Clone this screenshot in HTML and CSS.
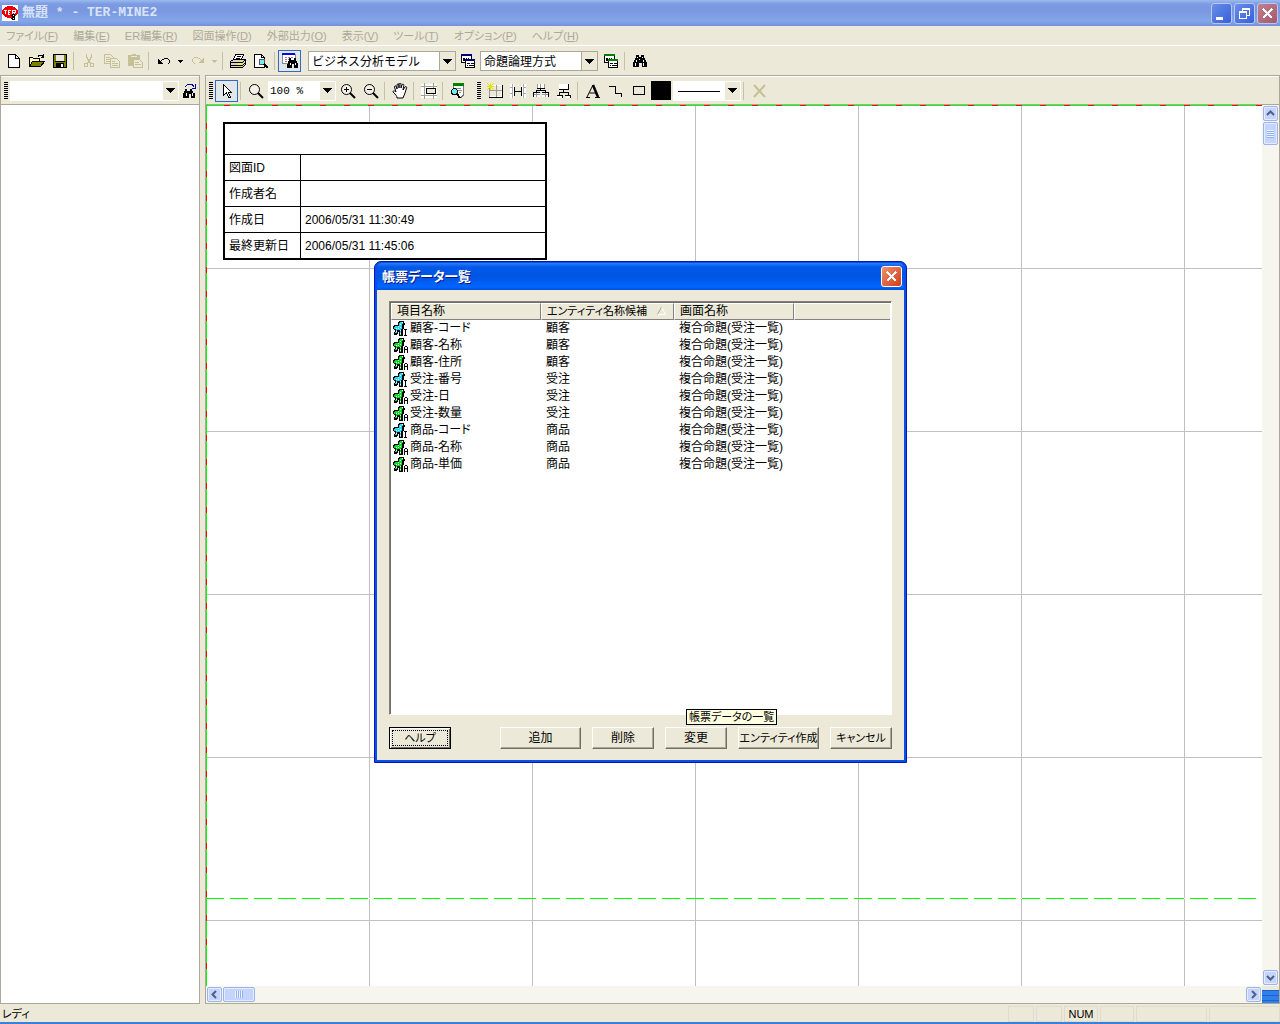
FILE: index.html
```html
<!DOCTYPE html>
<html lang="ja">
<head>
  <meta charset="UTF-8" />
  <title>無題 * - TER-MINE2</title>
  <link rel="stylesheet" href="styles.css">
</head>
<body>
  <svg class="defs" width="0" height="0" aria-hidden="true">
    <symbol id="down" viewBox="0 0 9 5"><path d="M0 0h9v1H0zM1 1h7v1H1zM2 2h5v1H2zM3 3h3v1H3zM4 4h1v1H4z" fill="currentColor"/></symbol>
    <symbol id="man" viewBox="0 0 16 16">
      <path d="M6 0h5v2h1v2h-1v4h-1v7H6v-4H5v2H4v1H1v-3h1V9H1V8H0V5h1V4h4V1h1z" fill="#000"/>
      <path d="M7 1h3v2H9v5H8v6H7V9H4v3H2v-1h1V8H1V6h1V5h4V2h1z" fill="currentColor"/>
      <path d="M9 1h1v1H9zM7 3h1v1H7zM5 5h1v1H5zM7 6h1v1H7zM3 7h1v1H3zM5 7h1v1H5zM7 9h1v1H7zM3 10h1v1H3zM7 12h1v1H7z" fill="#fff"/>
    </symbol>
    <symbol id="man-i" viewBox="0 0 16 16"><use href="#man" width="16" height="16"/><path d="M10 8h6v8h-6z" fill="#fff"/><path d="M11 8h3v1h-1v5h1v1h-3v-1h1V9h-1z" fill="#000"/></symbol>
    <symbol id="man-a" viewBox="0 0 16 16"><use href="#man" width="16" height="16"/><path d="M10 8h6v8h-6z" fill="#fff"/><path d="M12 8h2v1h-2zM11 9h1v6h-1zM14 9h1v6h-1zM12 11h2v1h-2z" fill="#000"/></symbol>
    <symbol id="binoculars" viewBox="0 0 16 16">
      <path d="M4 2h3v2h2V2h3v3h1v2h1v2h1v5h-5v-4H7v4H1V9h1V7h1V5h1z" fill="#000"/>
      <path d="M5 4h1v1H5zM10 4h1v1h-1zM4 7h1v2H4zM11 7h1v2h-1zM3 10h1v3H3zM11 10h1v3h-1zM7 6h1v1H7z" fill="#fff"/>
    </symbol>
    <symbol id="forms" viewBox="0 0 16 16">
      <path d="M1.500 1.500h10v8h-10z" fill="#fff" stroke="#000"/><path d="M1 1h11v2H1z" fill="currentColor"/>
      <path d="M3 5h2v3H3zM6 5h1v3H6zM8 5h1v3H8z" fill="#000"/>
      <path d="M5.500 6.500h9v8h-9z" fill="#fff" stroke="#000"/><path d="M5 6h10v2H5z" fill="currentColor"/>
      <path d="M7 10h3v1H7zM11 10h3v1h-3zM7 12h1v1H7zM9 12h5v1H9z" fill="#000"/>
    </symbol>
  </svg>

  <div class="window">
    <header class="titlebar">
      <svg class="app-icon" viewBox="0 0 16 16"><path d="M0 0h16v16H0z" fill="#fff"/><ellipse cx="8" cy="7" rx="8" ry="6" fill="#e00"/><path d="M2 5h3M3.500 5L3 9M6 5h3M6 7h2M6 9h2M6 5v4M10 9V5h3v2h-3M12 7l1 2" stroke="#fff" fill="none"/><circle cx="11.500" cy="10.500" r="1.500" fill="#fff" stroke="#000"/><circle cx="11.500" cy="13.500" r="1.500" fill="#fff" stroke="#000"/></svg>
      <h1>無題 * - TER-MINE2</h1>
      <button class="win-btn" aria-label="最小化"><svg viewBox="0 0 19 19"><path d="M4 13h7v3H4z" fill="#fff"/></svg></button>
      <button class="win-btn" aria-label="元に戻す"><svg viewBox="0 0 19 19"><path d="M7 4h8v2H7zM14 6h1v6h-1zM12 11h2v1h-2zM7 6h1v1H7zM4 7h8v2H4zM4 9h1v6H4zM11 9h1v6h-1zM5 14h6v1H5z" fill="#fff"/></svg></button>
      <button class="win-btn close" aria-label="閉じる"><svg viewBox="0 0 19 19"><path d="M5 5l9 9M14 5l-9 9" stroke="#fff" stroke-width="2"/></svg></button>
    </header>

    <nav class="menubar kana">
      <button>ファイル(<u>F</u>)</button>
      <button>編集(<u>E</u>)</button>
      <button>ER編集(<u>R</u>)</button>
      <button>図面操作(<u>D</u>)</button>
      <button>外部出力(<u>O</u>)</button>
      <button>表示(<u>V</u>)</button>
      <button>ツール(<u>T</u>)</button>
      <button>オプション(<u>P</u>)</button>
      <button>ヘルプ(<u>H</u>)</button>
    </nav>

    <div class="toolbar standard">
      <button class="tool" aria-label="新規作成"><svg viewBox="0 0 16 16"><path d="M2.500 1.500h7l4 4v9h-11z" fill="#fff" stroke="#000"/><path d="M9.500 1.500v4h4" fill="none" stroke="#000"/></svg></button>
      <button class="tool" aria-label="開く"><svg viewBox="0 0 16 16"><path d="M.5 13.500v-9h3l1 1h6v3" fill="#ffffb0" stroke="#000"/><path d="M.5 13.500l3-5h12l-4 5z" fill="#808000" stroke="#000"/><path d="M9 3.500c1-2 3-2 5 0M14.500 1v3H12" fill="none" stroke="#000"/></svg></button>
      <button class="tool" aria-label="保存"><svg viewBox="0 0 16 16"><path d="M1.500 1.500h13v13h-13z" fill="#808000" stroke="#000"/><path d="M4 2h8v6H4z" fill="#ece9d8"/><path d="M4 10h8v5H4zM3 8h10v1H3z" fill="#000"/><path d="M9 11h2v3H9z" fill="#fff"/></svg></button>
      <span class="sep"></span>
      <button class="tool off" aria-label="切り取り"><svg viewBox="0 0 16 16"><path d="M5.500 1v3l4 6M10.500 1v3l-4 6" fill="none" stroke="currentColor" stroke-width="1.500"/><circle cx="5" cy="12" r="2" fill="none" stroke="currentColor"/><circle cx="11" cy="12" r="2" fill="none" stroke="currentColor"/></svg></button>
      <button class="tool off" aria-label="コピー"><svg viewBox="0 0 16 16"><path d="M.5 1.500h6l3 3v6h-9zM2 4h4M2 6h5M2 8h5" fill="none" stroke="currentColor"/><path d="M6.500 5.500h6l3 3v6h-9z" fill="#ece9d8" stroke="currentColor"/><path d="M8 8.500h3M8 10.500h6M8 12.500h6" stroke="currentColor"/></svg></button>
      <button class="tool off" aria-label="貼り付け"><svg viewBox="0 0 16 16"><path d="M1 2h4V1h4v1h4v11H1z" fill="currentColor"/><path d="M4 3h6v1H4z" fill="#ece9d8"/><path d="M6.500 6.500h6l3 3v5h-9z" fill="#ece9d8" stroke="currentColor"/><path d="M8 9.500h4M8 11.500h6" stroke="currentColor"/></svg></button>
      <span class="sep"></span>
      <button class="tool" aria-label="元に戻す"><svg viewBox="0 0 16 16"><path d="M2 6h1v1h1v1h1v1h1v1h1v1H2zM5 7h1v1H5zM6 6h2v1H6zM8 5h4v1H8zM12 6h1v1h-1zM13 7h1v3h-1zM12 10h1v1h-1z" fill="#000"/></svg></button>
      <button class="tool narrow" aria-label="元に戻す一覧"><svg class="arrow"><use href="#down"/></svg></button>
      <button class="tool off" aria-label="やり直し"><svg viewBox="0 0 16 16"><path d="M14 5h-1v1h-1v1h-1v1h-1v1H9v1h5zM10 6h1v1h-1zM8 5h2v1H8zM4 4h4v1H4zM3 5h1v1H3zM2 6h1v3H2zM3 9h1v1H3zM4 10h1v1H4z" fill="currentColor"/></svg></button>
      <button class="tool narrow off" aria-label="やり直し一覧"><svg class="arrow"><use href="#down"/></svg></button>
      <span class="sep"></span>
      <button class="tool" aria-label="印刷"><svg viewBox="0 0 16 16"><path d="M5.500 1.500h8l-2 5h-8z" fill="#fff" stroke="#000"/><path d="M.5 8.500l3-2h12v5l-3 3H.5z" fill="#d8d4c4" stroke="#000"/><path d="M7 3.500h4M6 5h4M1 9.500h12M1 12.500h12M13 9l2-2M13 12l2-2" stroke="#000"/><path d="M8 10h4v2H8z" fill="#ff0"/></svg></button>
      <button class="tool" aria-label="印刷プレビュー"><svg viewBox="0 0 16 16"><path d="M1.500 1.500h7l3 3v10h-10z" fill="#fff" stroke="#000"/><path d="M8.500 1.500v3h3" fill="none" stroke="#000"/><circle cx="9" cy="9" r="3" fill="#7ee" stroke="#555"/><path d="M11 11l4 4" stroke="#000" stroke-width="2"/></svg></button>
      <span class="sep"></span>
      <button class="tool on" aria-label="帳票データ一覧"><svg viewBox="0 0 16 16"><path d="M.5 1.500h13v9H.5z" fill="#fff" stroke="#888"/><path d="M0 0h13v2H0z" fill="#00f"/><path d="M3 4h2M6 4h2M9 4h2M3 6h2M6 6h2M3 8h2" stroke="#888"/><path d="M7 5h2v2h3V5h2v3h1v2h1v5h-4v-4h-2v4H5v-4h1V8h1z" fill="#000"/><path d="M8 10v2M13 10v2" stroke="#fff"/></svg></button>
      <span class="combo model"><select aria-label="モデル"><option>ビジネス分析モデル</option></select><span class="combo-arrow"><svg class="arrow"><use href="#down"/></svg></span></span>
      <button class="tool navy" aria-label="モデル設定"><svg><use href="#forms"/></svg></button>
      <span class="combo method"><select aria-label="方式"><option>命題論理方式</option></select><span class="combo-arrow"><svg class="arrow"><use href="#down"/></svg></span></span>
      <button class="tool green" aria-label="方式設定"><svg><use href="#forms"/></svg></button>
      <span class="sep"></span>
      <button class="tool" aria-label="検索"><svg><use href="#binoculars"/></svg></button>
    </div>

    <div class="workspace">
      <aside class="sidebar">
        <div class="toolbar">
          <span class="grip"></span>
          <span class="combo flat search"><select aria-label="検索対象"><option></option></select><span class="combo-arrow"><svg class="arrow"><use href="#down"/></svg></span></span>
          <button class="tool" aria-label="検索"><svg viewBox="0 0 16 16"><path d="M4 6h2v2h3V6h2v2h1v2h2v5h-4v-4H8v4H2v-5h1V8h1z" fill="#000"/><path d="M5 10v3M11 10v3" stroke="#fff"/><path d="M4 4l3-3h4l2 3M14.500 1v4H11" fill="none" stroke="#0000a0"/></svg></button>
        </div>
        <div class="tree"></div>
      </aside>

      <main class="editor">
        <div class="toolbar">
          <span class="grip"></span>
          <button class="tool on" aria-label="選択"><svg viewBox="0 0 16 16"><path d="M4.500 1.500v11l3-3 2 5h2l-2-5h3z" fill="#fff" stroke="#000"/></svg></button>
          <span class="sep"></span>
          <button class="tool wide" aria-label="ズーム"><svg class="round" viewBox="0 0 16 16"><circle cx="6.500" cy="6.500" r="5" fill="#f4f2e8" stroke="#000"/><path d="M10 10l5 5" stroke="#000" stroke-width="2"/></svg></button>
          <span class="combo flat zoom"><select aria-label="倍率"><option>100 %</option></select><span class="combo-arrow"><svg class="arrow"><use href="#down"/></svg></span></span>
          <button class="tool" aria-label="拡大"><svg class="round" viewBox="0 0 16 16"><circle cx="6.500" cy="6.500" r="5" fill="#f4f2e8" stroke="#000"/><path d="M4 6.500h5M6.500 4v5" stroke="#000"/><path d="M10 10l5 5" stroke="#000" stroke-width="2"/></svg></button>
          <button class="tool" aria-label="縮小"><svg class="round" viewBox="0 0 16 16"><circle cx="6.500" cy="6.500" r="5" fill="#f4f2e8" stroke="#000"/><path d="M4 6.500h5" stroke="#000"/><path d="M10 10l5 5" stroke="#000" stroke-width="2"/></svg></button>
          <span class="sep"></span>
          <button class="tool" aria-label="移動"><svg class="round" viewBox="0 0 16 16"><path d="M5 15c0-2-1-3-4-6 0-2 2-1 3 0L2.500 4c0-1.500 1.500-1.500 2 0L5 6V2c0-1.500 2-1.500 2 0v3-4c0-1.500 2-1.500 2 0v4l1-3c.5-1.500 2-1 1.800.5L11 7l2-3c1-1 2 0 1.500 1L13 10l-2 5z" fill="#fff" stroke="#000"/></svg></button>
          <span class="sep"></span>
          <button class="tool" aria-label="グリッド"><svg viewBox="0 0 16 16"><path d="M0 1h16v14H0z" fill="#fff"/><path d="M3 0h1v16H3zM12 0h1v16h-1zM0 3h16v1H0zM0 12h16v1H0z" fill="#a0a090"/><path d="M5 5h10v6H5z" fill="#000"/><path d="M6 6h8v4H6z" fill="#ece9d8"/></svg></button>
          <span class="sep"></span>
          <button class="tool" aria-label="図面検索"><svg viewBox="0 0 16 16"><path d="M3 1h11v12H7" fill="#fff"/><path d="M3 0h11v3H3z" fill="#008000"/><path d="M3.500 3v3M13.500 3v9l-2 2H8" fill="none" stroke="#777"/><path d="M6 5h5M8 7h4M9 9h2" stroke="#888"/><circle cx="4.500" cy="8.500" r="3" fill="#6ee" stroke="#000"/><path d="M7 11l3 4" stroke="#000" stroke-width="2"/></svg></button>
          <span class="grip inner"></span>
          <button class="tool" aria-label="エンティティ"><svg viewBox="0 0 16 16"><path d="M2 2h14v13H2z" fill="#fff"/><path d="M2 14h14v1H2zM15 2h1v13h-1z" fill="#000"/><path d="M3 3h11v10H3z" fill="#ece9d8"/><path d="M2 7h13v1H2zM9 2h1v12H9zM2 2h1v12H2z" fill="#999"/><path d="M0 0h1v1H0zM1 1h1v1H1zM2 2h3v3H2zM5 1h1v1H5zM6 0h1v1H6zM5 5h1v1H5zM6 6h1v1H6zM1 5h1v1H1zM0 6h1v1H0zM3 0h1v7H3zM0 3h7v1H0z" fill="#e8e000"/></svg></button>
          <button class="tool" aria-label="リレーション"><svg viewBox="0 0 16 16"><path d="M0 1h4v14H0zM12 1h4v14h-4z" fill="#fff"/><path d="M0 4h3v1H0zM0 10h3v1H0zM2 1h1v14H2zM13 4h3v1h-3zM13 10h3v1h-3zM13 1h1v14h-1z" fill="#aaa"/><path d="M4 4h1v9H4zM11 4h1v9h-1zM4 8h8v1H4z" fill="#000"/></svg></button>
          <button class="tool" aria-label="サブセット"><svg viewBox="0 0 16 16"><path d="M0 9h7v5H0zM9 9h7v5H9zM4 1h8v4H4z" fill="#fff"/><path d="M4 1h1v4H4zM7 1h1v4H7zM11 1h1v4h-1zM0 11h7v1H0zM9 11h7v1H9zM3 10h1v4H3zM12 10h1v4h-1z" fill="#999"/><path d="M4 5h8v1H4zM7 6h1v2H7zM3 7h10v1H3zM3 8h1v1H3zM12 8h1v1h-1zM0 9h7v1H0zM9 9h7v1H9zM0 9h1v5H0zM15 9h1v5h-1z" fill="#000"/></svg></button>
          <button class="tool" aria-label="統合"><svg viewBox="0 0 16 16"><path d="M3 1h10v5H3zM1 13h5v2H1zM10 13h5v2h-5z" fill="#fff"/><path d="M3 6h10v1H3zM12 1h1v6h-1zM7 7h1v3H7zM3 9h10v1H3zM3 10h1v2H3zM12 10h1v2h-1zM1 12h6v1H1zM9 12h6v1H9zM6 12h1v3H6zM14 12h1v3h-1z" fill="#000"/></svg></button>
          <span class="sep"></span>
          <button class="tool" aria-label="文字"><svg class="round" viewBox="0 0 16 16"><path d="M2 14L8 2l5 12M4.500 10h7M1 14.500h4M10 14.500h5" fill="none" stroke="#000"/><path d="M8 2l5 12" stroke="#000" stroke-width="2.500"/></svg></button>
          <button class="tool" aria-label="折れ線"><svg viewBox="0 0 16 16"><path d="M1 3h7v1H1zM7 3h1v8H7zM7 10h7v1H7zM13 10h1v4h-1z" fill="#000"/></svg></button>
          <button class="tool" aria-label="四角形"><svg viewBox="0 0 16 16"><path d="M2.500 3.500h11v8h-11z" fill="none" stroke="#000"/></svg></button>
          <button class="color" aria-label="線の色"></button>
          <span class="combo flat line"><select aria-label="線種"><option></option></select><span class="combo-arrow"><svg class="arrow"><use href="#down"/></svg></span></span>
          <span class="sep"></span>
          <button class="tool off" aria-label="削除"><svg class="round" viewBox="0 0 16 16"><path d="M3 2l11 12M14 2L3 14" stroke="currentColor" stroke-width="2"/></svg></button>
        </div>

        <div class="view">
          <div class="canvas">
            <table class="sheet-info">
              <tr><td colspan="2" class="sheet-title"></td></tr>
              <tr><th scope="row">図面ID</th><td></td></tr>
              <tr><th scope="row">作成者名</th><td></td></tr>
              <tr><th scope="row">作成日</th><td>2006/05/31 11:30:49</td></tr>
              <tr><th scope="row">最終更新日</th><td>2006/05/31 11:45:06</td></tr>
            </table>
          </div>
          <div class="scroll vertical">
            <button aria-label="上へ"><svg viewBox="0 0 9 9"><path d="M1 6l3.500-3.500L8 6"/></svg></button>
            <span class="thumb"></span>
            <button class="end" aria-label="下へ"><svg viewBox="0 0 9 9"><path d="M1 3l3.500 3.500L8 3"/></svg></button>
          </div>
          <div class="scroll horizontal">
            <button aria-label="左へ"><svg viewBox="0 0 9 9"><path d="M6 1L2.500 4.500 6 8"/></svg></button>
            <span class="thumb"></span>
            <button class="end" aria-label="右へ"><svg viewBox="0 0 9 9"><path d="M3 1l3.500 3.500L3 8"/></svg></button>
          </div>
          <div class="corner"></div>
        </div>
      </main>
    </div>

    <footer class="statusbar">
      <span class="message kana">レディ</span>
      <span class="pane small"></span>
      <span class="pane small"></span>
      <span class="pane num kana">NUM</span>
      <span class="pane num"></span>
      <span class="pane large"></span>
      <span class="pane large"></span>
    </footer>
  </div>

  <section class="dialog" role="dialog" aria-labelledby="dialogTitle">
    <header class="dialog-title">
      <h2 id="dialogTitle">帳票データ一覧</h2>
      <button class="win-btn close" aria-label="閉じる"><svg viewBox="0 0 19 19"><path d="M5 5l9 9M14 5l-9 9" stroke="#fff" stroke-width="2"/></svg></button>
    </header>
    <div class="dialog-body">
      <div class="list">
        <table>
          <thead>
            <tr>
              <th class="col-item">項目名称</th>
              <th class="col-entity kana"><svg class="sort" viewBox="0 0 9 8"><path d="M4.500 0l4 7.500h-8" stroke="#fff" fill="none"/><path d="M.5 7.500L4.500 0" stroke="#aca899"/></svg>エンティティ名称候補</th>
              <th class="col-screen">画面名称</th>
              <th class="col-rest"></th>
            </tr>
          </thead>
          <tbody>
            <tr><td class="id"><svg><use href="#man-i"/></svg>顧客-コード</td><td>顧客</td><td>複合命題(受注一覧)</td><td></td></tr>
            <tr><td><svg><use href="#man-a"/></svg>顧客-名称</td><td>顧客</td><td>複合命題(受注一覧)</td><td></td></tr>
            <tr><td><svg><use href="#man-a"/></svg>顧客-住所</td><td>顧客</td><td>複合命題(受注一覧)</td><td></td></tr>
            <tr><td class="id"><svg><use href="#man-i"/></svg>受注-番号</td><td>受注</td><td>複合命題(受注一覧)</td><td></td></tr>
            <tr><td><svg><use href="#man-a"/></svg>受注-日</td><td>受注</td><td>複合命題(受注一覧)</td><td></td></tr>
            <tr><td><svg><use href="#man-a"/></svg>受注-数量</td><td>受注</td><td>複合命題(受注一覧)</td><td></td></tr>
            <tr><td class="id"><svg><use href="#man-i"/></svg>商品-コード</td><td>商品</td><td>複合命題(受注一覧)</td><td></td></tr>
            <tr><td><svg><use href="#man-a"/></svg>商品-名称</td><td>商品</td><td>複合命題(受注一覧)</td><td></td></tr>
            <tr><td><svg><use href="#man-a"/></svg>商品-単価</td><td>商品</td><td>複合命題(受注一覧)</td><td></td></tr>
          </tbody>
        </table>
      </div>
      <div class="actions">
        <button class="btn default kana"><span>ヘルプ</span></button>
        <button class="btn add">追加</button>
        <button class="btn">削除</button>
        <button class="btn">変更</button>
        <button class="btn add kana">エンティティ作成</button>
        <button class="btn kana">キャンセル</button>
      </div>
    </div>
    <div class="tooltip kana" role="tooltip">帳票データの一覧</div>
  </section>
</body>
</html>
```

FILE: styles.css
```css
* {
  box-sizing: border-box;
}

body {
  margin: 0;
  background: #ece9d8;
  color: #000;
  font: 12px/16px "Liberation Sans", "Noto Sans CJK JP", sans-serif;
  font-feature-settings: "palt";
  overflow: hidden;
}

button {
  margin: 0;
  padding: 0;
  border: 0;
  background: none;
  color: inherit;
  font: inherit;
  font-feature-settings: inherit;
  white-space: nowrap;
}

h1, h2 {
  flex: 1;
  margin: 0;
}

svg {
  width: 16px;
  height: 16px;
  flex: none;
  shape-rendering: crispEdges;
}

svg.round {
  shape-rendering: auto;
}

.defs {
  position: absolute;
  width: 0;
  height: 0;
}

.kana {
  font-size: 11px;
}

.window {
  display: flex;
  flex-direction: column;
  height: 100vh;
  border-bottom: 2px solid #3a80d8;
}

/* title bar */
.titlebar {
  display: flex;
  align-items: center;
  gap: 2px;
  height: 26px;
  padding: 0 2px;
  background: linear-gradient(#9db9ee 0, #7b9ce4 4px, #7a96df 10px, #82a7e8 21px, #7590dc 26px);
  color: #d8e4f8;
}

.app-icon {
  margin-right: 2px;
}

.titlebar h1 {
  font: bold 13px/16px "Liberation Mono", "Noto Sans CJK JP", monospace;
}

.win-btn {
  width: 21px;
  height: 21px;
  border: 1px solid #b8c8f0;
  border-radius: 3px;
  background: linear-gradient(135deg, #6a8ee8, #3660dc);
}

.win-btn svg {
  display: block;
  width: 19px;
  height: 19px;
}

.titlebar .close {
  background: linear-gradient(135deg, #c08090, #a85868);
}

/* menu */
.menubar {
  display: flex;
  align-items: center;
  gap: 15px;
  height: 20px;
  padding: 0 6px;
  border-bottom: 1px solid #fff;
  color: #aca899;
}

/* toolbars */
.toolbar {
  display: flex;
  align-items: center;
  height: 28px;
}

.standard {
  height: 29px;
  padding: 1px 0 0 2px;
}

.tool {
  display: flex;
  align-items: center;
  justify-content: center;
  width: 23px;
  height: 22px;
}

.tool.on {
  border: 1px solid #316ac5;
  background: #e1e6e8;
}

.tool.off {
  color: #c5c095;
}

.tool.narrow {
  width: 11px;
}

.tool.narrow .arrow {
  width: 5px;
}

.tool.wide {
  width: 24px;
}

.navy {
  color: #000080;
}

.green {
  color: #008000;
}

.sep {
  width: 6px;
  height: 18px;
  background: linear-gradient(#c5c2a5, #c5c2a5) 2px 0 / 1px 100% no-repeat;
}

.grip {
  width: 4px;
  height: 18px;
  margin: 0 2px 0 3px;
  background: repeating-linear-gradient(#000 0, #000 1px, transparent 1px, transparent 2px);
}

.grip.inner {
  margin-left: 8px;
}

.arrow {
  width: 9px;
  height: 5px;
}

.combo {
  position: relative;
  display: flex;
  height: 20px;
  border: 1px solid #aca899;
  background: #fff;
}

.combo select {
  flex: 1;
  min-width: 0;
  padding: 0 3px;
  border: 0;
  appearance: none;
  background: none;
  color: #000;
  font: 12px/16px "Noto Sans CJK JP", sans-serif;
}

.combo-arrow {
  display: flex;
  align-items: center;
  justify-content: center;
  width: 16px;
  border-left: 1px solid #aca899;
  background: #ece9d8;
  pointer-events: none;
}

.combo.flat {
  border-color: #fff;
}

.flat .combo-arrow {
  border-color: #fff;
}

.model {
  width: 148px;
  margin-left: 7px;
}

.method {
  width: 118px;
  margin: 0 1px;
}

.search {
  flex: 1;
}

.sidebar .tool {
  width: 20px;
}

.zoom {
  width: 68px;
}

.zoom select {
  padding: 0 1px;
  font: 11px/16px "Liberation Mono", monospace;
}

.line {
  width: 68px;
}

.line select {
  background: linear-gradient(#000, #000) 4px 9px / 42px 1px no-repeat;
}

.color {
  width: 20px;
  height: 19px;
  margin: 0 2px 0 1px;
  background: #000;
}

/* workspace */
.workspace {
  display: flex;
  gap: 5px;
  flex: 1;
  min-height: 0;
}

.sidebar,
.editor {
  display: flex;
  flex-direction: column;
  border: 1px solid #aca899;
}

.sidebar {
  width: 200px;
}

.editor {
  flex: 1;
  min-width: 0;
}

.workspace .toolbar {
  border-top: 1px solid #fff;
}

.tree {
  flex: 1;
  border-top: 1px solid #aca899;
  background: #fff;
}

.view {
  display: grid;
  grid-template-columns: 1fr 17px;
  grid-template-rows: 1fr 17px;
  flex: 1;
  border-top: 1px solid #aca899;
}

/* page edges, page break, then the 163px grid */
.canvas {
  position: relative;
  background:
    repeating-linear-gradient(90deg, #0f0 0, #0f0 18px, #f00 18px, #f00 24px) 0 0 / 100% 1px no-repeat,
    repeating-linear-gradient(#0f0 0, #0f0 18px, #f00 18px, #f00 24px) 0 0 / 1px 100% no-repeat,
    repeating-linear-gradient(90deg, #0f0 0, #0f0 18px, #fff 18px, #fff 24px) 0 793px / 100% 1px no-repeat,
    linear-gradient(90deg, #c0c0c0 1px, transparent 1px) 0 0 / 163px 163px,
    linear-gradient(#c0c0c0 1px, transparent 1px) 0 0 / 163px 163px,
    #fff;
}

.sheet-info {
  position: absolute;
  left: 17px;
  top: 17px;
  width: 324px;
  border: 2px solid #000;
  border-spacing: 0;
  background: #fff;
}

.sheet-info .sheet-title {
  height: 30px;
  border-top: 0;
}

.sheet-info th,
.sheet-info td {
  height: 26px;
  padding: 0 4px;
  border-top: 1px solid #000;
  font-weight: normal;
  text-align: left;
}

.sheet-info th {
  width: 76px;
  border-right: 1px solid #000;
}

/* scroll bars */
.scroll {
  display: flex;
  gap: 1px;
  padding: 1px;
  background: #f6f5ee;
}

.vertical {
  flex-direction: column;
}

.scroll button,
.thumb {
  display: flex;
  align-items: center;
  justify-content: center;
  width: 15px;
  height: 15px;
  border: 1px solid #9cb4ea;
  border-radius: 2px;
  background: #c4d4fc;
  box-shadow: inset 0 0 0 1px #e4ecff;
}

.scroll svg {
  width: 9px;
  height: 9px;
  fill: none;
  stroke: #4d6185;
  stroke-width: 2;
  shape-rendering: auto;
}

.vertical .thumb {
  height: 23px;
  background: repeating-linear-gradient(#eef4fe 0, #eef4fe 1px, #8cb0f8 1px, #8cb0f8 2px) center / 7px 8px no-repeat #c4d4fc;
}

.horizontal .thumb {
  width: 32px;
  background: repeating-linear-gradient(90deg, #eef4fe 0, #eef4fe 1px, #8cb0f8 1px, #8cb0f8 2px) center / 8px 7px no-repeat #c4d4fc;
}

.vertical .end {
  margin-top: auto;
}

.horizontal .end {
  margin-left: auto;
}

.corner {
  margin-top: 4px;
  background: repeating-linear-gradient(#1c62d0 0, #1c62d0 1px, #2f80ea 1px, #2f80ea 5px);
}

/* status bar */
.statusbar {
  display: flex;
  gap: 2px;
  height: 18px;
  padding: 2px 0 0 2px;
}

.message {
  flex: 1;
}

.pane {
  border: 1px solid #dedcd0;
  text-align: center;
  line-height: 15px;
}

.pane.small {
  width: 26px;
}

.pane.num {
  width: 34px;
}

.pane.large {
  width: 71px;
}

/* dialog */
.dialog {
  position: absolute;
  left: 374px;
  top: 261px;
  width: 533px;
  padding: 1px 2px 2px;
  border: 1px solid #0019b8;
  border-radius: 7px 7px 0 0;
  background: #0a50e8;
}

.dialog-title {
  display: flex;
  align-items: center;
  height: 27px;
  padding: 0 2px 0 5px;
  border-radius: 5px 5px 0 0;
  background: linear-gradient(#2a80f8 0, #0458e8 4px, #0054e3 14px, #0066ff 24px, #0050d8 27px);
  color: #fff;
}

.dialog-title h2 {
  font-size: 13px;
  line-height: 16px;
  text-shadow: 1px 1px #0a1883;
}

.dialog .close {
  border-color: #fff;
  background: linear-gradient(135deg, #f09070, #d03c18);
}

.dialog-body {
  padding: 11px 12px;
  background: #ece9d8;
}

.list {
  height: 414px;
  padding: 1px;
  border: 1px solid;
  border-color: #808080 #fff #fff #808080;
  background: #fff;
  box-shadow: inset 1px 1px #716f64;
}

.list table {
  width: 100%;
  border-spacing: 0;
  table-layout: fixed;
}

.list th,
.list td {
  height: 17px;
  padding: 0 5px;
  font-weight: normal;
  line-height: 15px;
  text-align: left;
  white-space: nowrap;
}

.list th {
  border: 1px solid;
  border-color: #fff #808080 #808080 #fff;
  background: #ece9d8;
}

.list .col-rest {
  border-right: 0;
}

.list td:first-child {
  display: flex;
  align-items: center;
  gap: 1px;
  padding: 0 2px;
}

.list td svg {
  color: #00e020;
}

.list td.id svg {
  color: #20d8f0;
}

.col-item {
  width: 150px;
}

.col-entity {
  width: 133px;
}

.col-screen {
  width: 120px;
}

.list .sort {
  float: right;
  width: 9px;
  height: 8px;
  margin: 3px 2px 0;
  shape-rendering: auto;
}

.actions {
  display: flex;
  gap: 11px;
  margin-top: 12px;
}

.btn {
  width: 62px;
  height: 22px;
  border: 1px solid;
  border-color: #fff #716f64 #716f64 #fff;
  box-shadow: inset -1px -1px #aca899;
}

.btn.add {
  width: 81px;
}

.btn.default {
  margin-right: auto;
  padding: 2px;
  border-color: #000;
  box-shadow: inset 1px 1px #fff, inset -1px -1px #716f64;
}

.btn.default span {
  display: block;
  height: 16px;
  border: 1px dotted #000;
  line-height: 14px;
}

.tooltip {
  position: absolute;
  left: 311px;
  top: 447px;
  padding: 0 2px;
  border: 1px solid #000;
  background: #ffffe1;
  line-height: 14px;
}
```
